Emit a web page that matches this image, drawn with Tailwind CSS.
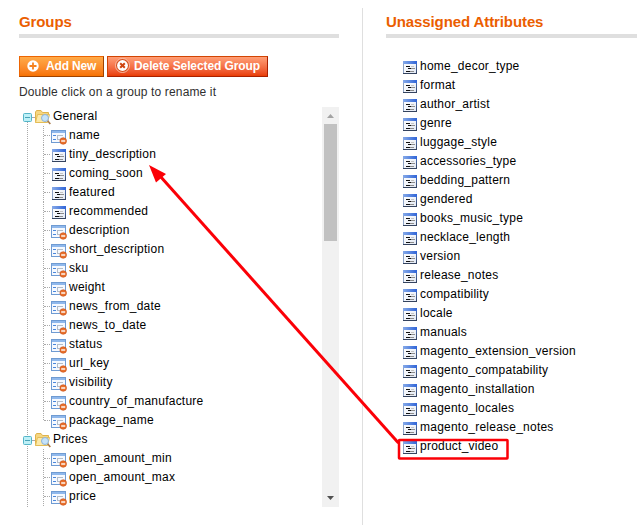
<!DOCTYPE html>
<html lang="en">
<head>
<meta charset="utf-8">
<title>Attribute groups</title>
<script src="https://cdn.jsdelivr.net/npm/@tailwindcss/browser@4"></script>
</head>
<body class="w-[637px] h-[525px] overflow-hidden bg-white text-black text-[12px] font-['Liberation_Sans',Arial,sans-serif]">
<svg class="absolute h-0 w-0">
  <defs>
    <linearGradient id="bar" x2="1"><stop stop-color="#86aae8"/><stop offset="1" stop-color="#2f64d8"/></linearGradient>
    <linearGradient id="frame" y2="1" x2="0"><stop stop-color="#4c78cc"/><stop offset="1" stop-color="#34435f"/></linearGradient>
    <linearGradient id="paper" x2="1" y2="1"><stop stop-color="#fff"/><stop offset="1" stop-color="#e2e9f5"/></linearGradient>
  </defs>
  <symbol id="attr" viewBox="0 0 14 13">
    <rect x=".5" y=".5" width="13" height="12" fill="url(#paper)" stroke="url(#frame)"/>
    <path d="M.5 3V12" stroke="#8ea3c5"/>
    <rect width="14" height="3" fill="url(#bar)"/>
    <path d="M3 5.5H7M5 7.5H8M3 10.5H7" stroke="#111"/>
    <path d="M8 7.5H12M7 10.5H11" stroke="#8c8c8c"/>
    <path d="M8 5.5H11" stroke="#c4c4c4"/>
  </symbol>
  <symbol id="sys" viewBox="0 0 16 15">
    <rect x=".5" y=".5" width="14" height="12" fill="#f5f9ff" stroke="#6f9bd2"/>
    <rect x="1" y="1" width="13" height="2" fill="#8fb8ec"/>
    <path d="M2 5.5H5M2 9.5H5" stroke="#4a87dc"/>
    <path d="M6 5.5H12M6 9.5H9M6.5 6V9" stroke="#b4bdc8"/>
    <circle cx="12.200" cy="11" r="3.300" fill="#e8702c" stroke="#c84c10" stroke-width=".6"/>
    <path d="M10.200 11H14.200" stroke="#fff" stroke-width="1.400"/>
  </symbol>
  <symbol id="folder" viewBox="0 0 16 15">
    <path d="M.5 12.5V2L1.5 .5H6L7.500 2.500H13.500V5" fill="#f5d682" stroke="#dfb34c"/>
    <path d="M.5 12.500L2.500 4.500H14.500L12.500 12.500Z" fill="#fce9a9" stroke="#e4bd58"/>
    <path d="M12 10L15.300 14" stroke="#a97c4d" stroke-width="1.600"/>
    <circle cx="10" cy="8" r="3.500" fill="#c5e3fa" stroke="#8fb3d8"/>
  </symbol>
  <symbol id="toggle" viewBox="0 0 9 9">
    <rect x=".5" y=".5" width="8" height="8" rx="1" fill="#bdf0f7" stroke="#55b5c8"/>
    <path d="M2 4.500H7" stroke="#4aa3b8"/>
  </symbol>
</svg>
<main class="flex h-[525px] pt-2 pl-[19px]">
  <section class="w-[320px] shrink-0">
    <h2 class="h-[30px] border-b-4 border-[#dfdfdf] text-[15px] leading-[28px] font-bold text-[#eb5e00] tracking-[-0.1px]">Groups</h2>
    <div class="flex gap-[3px] mt-[18px] h-[21px] text-white font-bold leading-[18px]">
      <button class="flex w-[85px] border border-[#ed6502] border-r-[#a04300] border-b-[#a04300] bg-linear-to-b from-[#ffab48] to-[#f77200] pl-[7px]">
        <svg class="mt-[3px] mr-[7px] h-3 w-3" viewBox="0 0 12 12"><circle cx="6" cy="6" r="5.700" fill="#fff"/><path d="M6 2.500V9.500M2.500 6H9.500" stroke="#f58220" stroke-width="1.800"/></svg><span class="whitespace-nowrap tracking-[-0.15px]">Add New</span>
      </button>
      <button class="flex w-[161px] border border-[#d24403] border-r-[#a92000] border-b-[#a92000] bg-linear-to-b from-[#ff9e75] to-[#e83c00] pl-[7px]">
        <svg class="mt-[1px] mr-[4px] h-[15px] w-[15px]" viewBox="0 0 15 15"><circle cx="7.500" cy="7.500" r="7" fill="#d7501e" stroke="#ffd6c4" stroke-width=".8"/><circle cx="7.500" cy="7.500" r="5.400" fill="#fff"/><path d="M5.200 5.200L9.800 9.800M9.800 5.200L5.200 9.800" stroke="#cf4510" stroke-width="2"/></svg><span class="whitespace-nowrap tracking-[-0.1px]">Delete Selected Group</span>
      </button>
    </div>
    <p class="mt-[5px] h-[25px] leading-[20px] text-[#2f2f2f] tracking-[0.14px]">Double click on a group to rename it</p>
    <div class="flex h-[400px] justify-between overflow-hidden">
      <div id="tree" class="relative w-[290px]"></div>
      <div class="flex w-[17px] flex-col items-center bg-[#f1f1f1]">
        <svg class="h-[17px] w-[17px] shrink-0" viewBox="0 0 17 17"><path d="M5 11L8.500 7L12 11Z" fill="#a3a3a3"/></svg>
        <div class="h-[117px] w-[13px] bg-[#c1c1c1]"></div>
        <svg class="mt-auto h-[17px] w-[17px] shrink-0" viewBox="0 0 17 17"><path d="M5 6L8.500 10L12 6Z" fill="#505050"/></svg>
      </div>
    </div>
  </section>
  <section class="ml-[23px] flex-1 border-l border-[#dfdfdf] pl-[23px]">
    <h2 class="h-[30px] border-b-4 border-[#dfdfdf] text-[15px] leading-[28px] font-bold text-[#eb5e00] tracking-[-0.1px]">Unassigned Attributes</h2>
    <div id="free" class="mt-[19px] pl-[17px]"></div>
  </section>
</main>
<svg class="absolute left-0 top-0" width="637" height="525" viewBox="0 0 637 525" fill="none">
  <rect x="399" y="440" width="108.500" height="18.500" rx=".5" stroke="#fb0007" stroke-width="2.500"/>
  <path d="M398.500 443L160 176" stroke="#fb0007" stroke-width="3"/>
  <path d="M149 165L166 174L156 182.500Z" fill="#fb0007"/>
</svg>
<script>
const groups = [
  ['General', 'name* tiny_description coming_soon featured recommended description* short_description* sku* weight* news_from_date* news_to_date* status* url_key* visibility* country_of_manufacture* package_name*'],
  ['Prices', 'open_amount_min* open_amount_max* price*']
];
const unassigned = 'home_decor_type format author_artist genre luggage_style accessories_type bedding_pattern gendered books_music_type necklace_length version release_notes compatibility locale manuals magento_extension_version magento_compatability magento_installation magento_locales magento_release_notes product_video';
const label = t => `<span class="leading-[19px] tracking-[0.23px]">${t}</span>`;
// names ending in * are system attributes
const leaf = (n, last) => `<li class="flex h-[19px]">
  <i class="w-[8px] mr-[1px] border-l border-dotted border-[#aaa] ${last ? 'h-[9px]' : 'h-[19px]'}"><b class="block mt-[9px] w-[6px] border-t border-dotted border-[#aaa]"></b></i>
  ${n.endsWith('*') ? '<svg class="mt-[4px] mr-[2px] -ml-[1px] h-[15px] w-[16px]"><use href="#sys"/></svg>' : '<svg class="mt-[4px] mr-[3px] h-[13px] w-[14px]"><use href="#attr"/></svg>'}${label(n.replace('*', ''))}</li>`;
document.getElementById('tree').innerHTML = '<i class="absolute left-[8px] top-[15px] h-[385px] border-l border-dotted border-[#aaa]"></i>' + groups.map(([g, names], gi) => `
  <div class="relative flex h-[19px] pl-[4px]"><svg class="mt-[6px] h-[9px] w-[9px]"><use href="#toggle"/></svg><i class="mt-[10px] mr-[1px] w-[2px] border-t border-dotted border-[#aaa]"></i><svg class="mt-[3px] mr-[2px] h-[15px] w-[16px]"><use href="#folder"/></svg>${label(g)}</div>
  <ul class="pl-[24px]">${names.split(' ').map((n, i, a) => leaf(n, gi === 0 && i === a.length - 1)).join('')}</ul>`).join('');
document.getElementById('free').innerHTML = unassigned.split(' ').map(n => `<div class="flex h-[19px]"><svg class="mt-[4px] mr-[3px] h-[13px] w-[14px]"><use href="#attr"/></svg>${label(n)}</div>`).join('');
</script>
</body>
</html>
